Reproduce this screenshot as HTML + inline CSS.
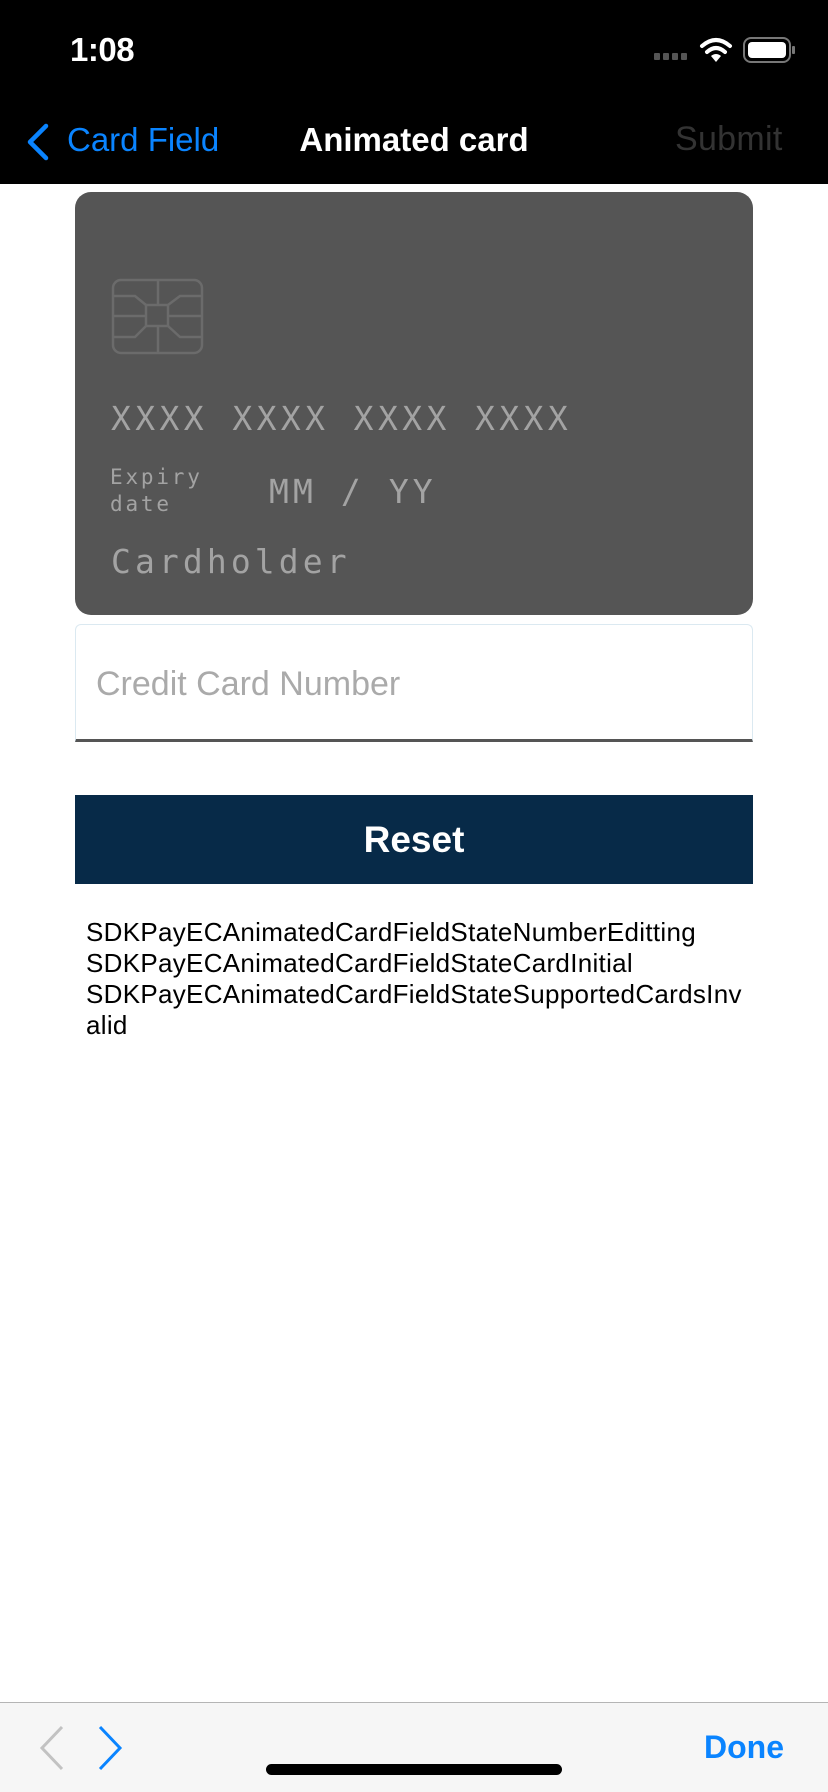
<!DOCTYPE html>
<html><head><meta charset="utf-8"><style>
*{margin:0;padding:0;box-sizing:border-box}
body{width:828px;height:1792px;background:#fff;position:relative;overflow:hidden;font-family:"Liberation Sans",sans-serif}
.abs{position:absolute;white-space:nowrap}
.mono{font-family:"DejaVu Sans Mono","Liberation Mono",monospace;color:#a3a3a3}
</style></head><body>
<div class="abs" style="left:0;top:0;width:828px;height:184px;background:#000"></div>
<div class="abs" style="left:70px;top:31px;font-size:33px;color:#fff;font-weight:600;letter-spacing:-0.5px">1:08</div>
<svg class="abs" style="left:650px;top:34px" width="150" height="32" viewBox="0 0 150 32">
<g fill="#555"><rect x="4" y="19" width="6" height="7" rx="1"/><rect x="13" y="19" width="6" height="7" rx="1"/><rect x="22" y="19" width="6" height="7" rx="1"/><rect x="31" y="19" width="6" height="7" rx="1"/></g>
<g fill="none" stroke="#fff" stroke-width="4" stroke-linecap="round"><path d="M52 12 Q66 0 80 12"/><path d="M57 18 Q66 10 75 18"/></g>
<path d="M61 22 L66 28 L71 22 Q66 18 61 22Z" fill="#fff"/>
<rect x="94" y="4" width="46" height="24" rx="7" fill="none" stroke="#777" stroke-width="2"/>
<rect x="98" y="8" width="38" height="16" rx="4" fill="#fff"/>
<rect x="142" y="12" width="3" height="8" rx="1" fill="#777"/>
</svg>
<svg class="abs" style="left:24px;top:122px" width="28" height="40" viewBox="0 0 28 40"><path d="M22 4 L6 20 L22 36" fill="none" stroke="#0a84ff" stroke-width="4.5" stroke-linecap="round" stroke-linejoin="round"/></svg>
<div class="abs" style="left:67px;top:121px;font-size:33px;color:#0a84ff">Card Field</div>
<div class="abs" style="left:0;width:828px;text-align:center;top:121px;font-size:33px;color:#fff;font-weight:600">Animated card</div>
<div class="abs" style="left:675px;top:120px;font-size:34px;color:#333;letter-spacing:0.3px">Submit</div>

<div class="abs" style="left:75px;top:192px;width:678px;height:423px;background:#555;border-radius:16px"></div>
<svg class="abs" style="left:110px;top:277px" width="96" height="80" viewBox="110 277 96 80">
<g fill="none" stroke="#6b6b6b" stroke-width="2.5">
<rect x="113" y="280" width="89" height="73" rx="8"/>
<rect x="146" y="305" width="22" height="21"/>
<path d="M158 280 V305 M158 326 V353 M113 316 H146 M168 316 H202 M113 296 H135 L146 305 M202 296 H180 L168 305 M113 337 H135 L146 326 M202 337 H180 L168 326"/>
</g></svg>
<div class="abs mono" style="left:111px;top:399px;font-size:33px;letter-spacing:4.4px">XXXX XXXX XXXX XXXX</div>
<div class="abs mono" style="left:110px;top:464px;font-size:21px;letter-spacing:2.8px;line-height:27px">Expiry<br>date</div>
<div class="abs mono" style="left:269px;top:472px;font-size:33px;letter-spacing:4.1px">MM / YY</div>
<div class="abs mono" style="left:111px;top:542px;font-size:33px;letter-spacing:4.1px">Cardholder</div>

<div class="abs" style="left:75px;top:624px;width:678px;height:118px;border:1.5px solid #dbe9f1;border-bottom:3px solid #555;border-radius:6px 6px 0 0"></div>
<div class="abs" style="left:96px;top:665px;font-size:34px;color:#aaa">Credit Card Number</div>

<div class="abs" style="left:75px;top:795px;width:678px;height:89px;background:#072a48;color:#fff;font-size:37px;font-weight:bold;text-align:center;line-height:89px">Reset</div>

<div class="abs" style="left:86px;top:917px;font-size:26px;line-height:31px;color:#000;letter-spacing:0.3px">SDKPayECAnimatedCardFieldStateNumberEditting<br>SDKPayECAnimatedCardFieldStateCardInitial<br>SDKPayECAnimatedCardFieldStateSupportedCardsInv<br>alid</div>

<div class="abs" style="left:0;top:1702px;width:828px;height:90px;background:#f6f6f6;border-top:1.5px solid #b5b5b5"></div>
<svg class="abs" style="left:36px;top:1724px" width="90" height="48" viewBox="0 0 90 48"><path d="M26 3 L6 24 L26 45" fill="none" stroke="#c2c2c2" stroke-width="3"/><path d="M64 3 L84 24 L64 45" fill="none" stroke="#0a84ff" stroke-width="3"/></svg>
<div class="abs" style="left:704px;top:1729px;font-size:32px;color:#0a84ff;font-weight:600">Done</div>
<div class="abs" style="left:266px;top:1764px;width:296px;height:11px;background:#000;border-radius:6px"></div>
</body></html>
